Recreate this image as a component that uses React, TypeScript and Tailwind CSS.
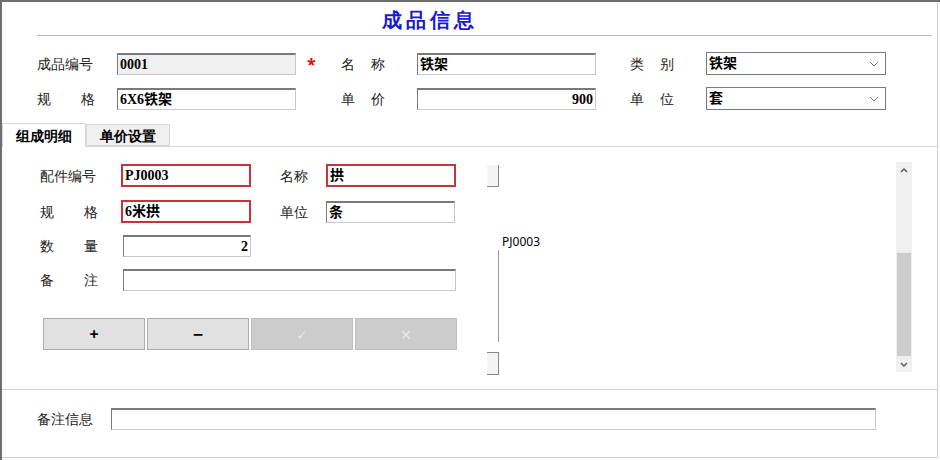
import React from "react";

const lab = "text-[14px] text-[#222] [font-family:'Noto_Sans_CJK_SC',sans-serif] leading-none";
const val = "font-bold text-[14px] text-black [font-family:Liberation_Serif,Noto_Sans_CJK_SC,serif]";
const inp = "h-[22px] border border-[#c8c8c8] border-t-2 border-t-[#7a7a7a] border-l-[#7a7a7a] bg-white flex items-center px-[2px] " + val;
const red = "h-[23px] border-2 border-[#c8323c] bg-white flex items-center px-[2px] " + val;

function Sel({ v }: { v: string }) {
  return (
    <div className={"w-[180px] h-[23px] border border-[#7a7a7a] bg-white flex items-center justify-between px-[2px] " + val}>
      <span>{v}</span>
      <svg width="10" height="6" viewBox="0 0 10 6" className="mr-[4px]"><path d="M1 1l4 4 4-4" stroke="#777" fill="none" /></svg>
    </div>
  );
}

function Spread({ a, b, w }: { a: string; b: string; w: string }) {
  return (
    <div className={"flex justify-between " + lab + " " + w}>
      <span>{a}</span>
      <span>{b}</span>
    </div>
  );
}

export default function App() {
  return (
    <div className="w-[940px] h-[460px] bg-white border-t-2 border-l-2 border-t-[#6e6e6e] border-l-[#6e6e6e] relative overflow-hidden">
      <div className="w-[936px] h-[456px] border-r border-b border-[#d0d0d0] flex flex-col">
        <div className="h-[33px] flex items-end justify-center pr-[80px]">
          <span className="text-[#1a1ad0] font-bold text-[20px] tracking-[4px] leading-none [font-family:'Noto_Sans_CJK_SC',sans-serif] pb-[5px]">成品信息</span>
        </div>
        <div className="ml-[35px] w-[895px] h-px bg-[#b8b8b8]" />
        <div className="flex flex-col gap-[12px] mt-[16px] ml-[35px]">
          <div className="flex items-center h-[23px]">
            <div className={"w-[80px] " + lab}>成品编号</div>
            <div className={inp + " w-[179px] !bg-[#f0f0f0]"}>0001</div>
            <div className="w-[45px] text-[#e00] text-[16px] pl-[11px] font-bold">*</div>
            <Spread a="名" b="称" w="w-[44px]" />
            <div className="w-[32px]" />
            <div className={inp + " w-[179px]"}>铁架</div>
            <div className="w-[34px]" />
            <Spread a="类" b="别" w="w-[44px]" />
            <div className="w-[32px]" />
            <Sel v="铁架" />
          </div>
          <div className="flex items-center h-[23px]">
            <Spread a="规" b="格" w="w-[58px]" />
            <div className="w-[22px]" />
            <div className={inp + " w-[179px]"}>6X6铁架</div>
            <div className="w-[45px]" />
            <Spread a="单" b="价" w="w-[44px]" />
            <div className="w-[32px]" />
            <div className={inp + " w-[179px] justify-end"}>900</div>
            <div className="w-[34px]" />
            <Spread a="单" b="位" w="w-[44px]" />
            <div className="w-[32px]" />
            <Sel v="套" />
          </div>
        </div>
        <div className="mt-[13px] flex items-end h-[24px] border-b border-[#d8d8d8]">
          <div className="w-[84px] h-[24px] bg-white border border-b-0 border-[#d8d8d8] flex items-center justify-center font-bold text-[14px] [font-family:'Noto_Sans_CJK_SC',sans-serif] -mb-px">组成明细</div>
          <div className="w-[84px] h-[22px] bg-[#f0f0f0] border border-[#d8d8d8] flex items-center justify-center font-bold text-[14px] [font-family:'Noto_Sans_CJK_SC',sans-serif]">单价设置</div>
        </div>
        <div className="h-[243px] border-b border-[#d0d0d0] flex">
          <div className="w-[480px] pl-[38px] pt-[17px] flex flex-col">
            <div className="flex items-center h-[23px]">
              <div className={"w-[81px] " + lab}>配件编号</div>
              <div className={red + " w-[130px]"}>PJ0003</div>
              <div className={"w-[75px] pl-[29px] " + lab}>名称</div>
              <div className={red + " w-[130px]"}>拱</div>
            </div>
            <div className="flex items-center h-[23px] mt-[13px]">
              <Spread a="规" b="格" w="w-[58px]" />
              <div className="w-[23px]" />
              <div className={red + " w-[130px]"}>6米拱</div>
              <div className={"w-[75px] pl-[29px] " + lab}>单位</div>
              <div className={inp + " w-[129px]"}>条</div>
            </div>
            <div className="flex items-center h-[23px] mt-[11px]">
              <Spread a="数" b="量" w="w-[58px]" />
              <div className="w-[25px]" />
              <div className={inp + " w-[128px] justify-end"}>2</div>
            </div>
            <div className="flex items-center h-[23px] mt-[11px]">
              <Spread a="备" b="注" w="w-[58px]" />
              <div className="w-[25px]" />
              <div className={inp + " w-[333px]"}></div>
            </div>
            <div className="flex gap-[2px] mt-[27px] ml-[3px]">
              <button className="w-[102px] h-[32px] bg-[#e1e1e1] border border-[#adadad] font-bold text-[16px] text-black">+</button>
              <button className="w-[102px] h-[32px] bg-[#e1e1e1] border border-[#adadad] font-bold text-[18px] text-black">−</button>
              <button className="w-[102px] h-[32px] bg-[#cccccc] border border-[#bfbfbf] text-[14px] text-[#e8e8e8]">✓</button>
              <button className="w-[102px] h-[32px] bg-[#cccccc] border border-[#bfbfbf] text-[14px] text-[#e8e8e8]">✕</button>
            </div>
          </div>
          <div className="flex-1 relative">
            <div className="absolute left-[5px] top-[18px] w-[12px] h-[22px] border-r border-b border-[#888] bg-[#f4f4f4]" />
            <div className="absolute left-[5px] top-[205px] w-[12px] h-[23px] border-r border-b border-t border-[#888] bg-[#f4f4f4]" />
            <div className="absolute left-[16px] top-[103px] w-px h-[92px] bg-[#999]" />
            <div className="absolute left-[20px] top-[86px] text-[12px] text-black [font-family:'Noto_Sans',sans-serif]">PJ0003</div>
            <div className="absolute left-[414px] top-[15px] w-[16px] h-[210px] bg-[#f0f0f0] flex flex-col">
              <div className="h-[16px] flex items-center justify-center"><svg width="8" height="5" viewBox="0 0 8 5"><path d="M1 4l3-3 3 3" stroke="#555" strokeWidth="1.4" fill="none" /></svg></div>
              <div className="h-[75px]" />
              <div className="h-[103px] bg-[#cdcdcd] mx-[1px]" />
              <div className="h-[16px] flex items-center justify-center"><svg width="8" height="5" viewBox="0 0 8 5"><path d="M1 1l3 3 3-3" stroke="#555" strokeWidth="1.4" fill="none" /></svg></div>
            </div>
          </div>
        </div>
        <div className="flex items-center mt-[18px] ml-[35px]">
          <div className={"w-[74px] " + lab}>备注信息</div>
          <div className={inp + " w-[765px]"}></div>
        </div>
      </div>
    </div>
  );
}
